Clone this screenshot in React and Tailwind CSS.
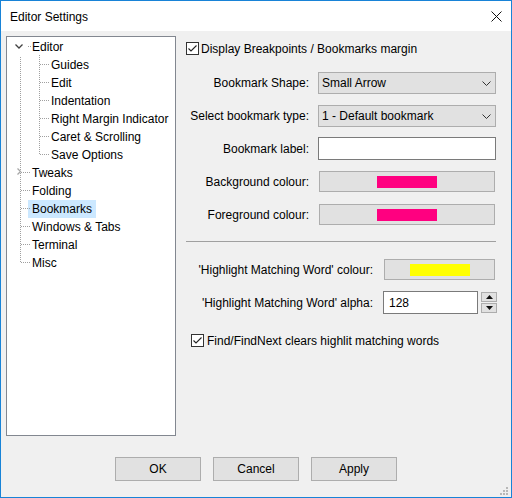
import React from 'react';

const tree = [
  { label: 'Editor', level: 0 },
  { label: 'Guides', level: 1 },
  { label: 'Edit', level: 1 },
  { label: 'Indentation', level: 1 },
  { label: 'Right Margin Indicator', level: 1 },
  { label: 'Caret & Scrolling', level: 1 },
  { label: 'Save Options', level: 1 },
  { label: 'Tweaks', level: 0 },
  { label: 'Folding', level: 0 },
  { label: 'Bookmarks', level: 0, selected: true },
  { label: 'Windows & Tabs', level: 0 },
  { label: 'Terminal', level: 0 },
  { label: 'Misc', level: 0 },
];

function Check() {
  return (
    <span className="w-[13px] h-[13px] border border-[#333333] bg-white flex items-center justify-center shrink-0">
      <svg width="11" height="11" viewBox="0 0 11 11">
        <path d="M1.5 5.5 L4 8 L9.5 2.5" stroke="#222" strokeWidth="1.1" fill="none" />
      </svg>
    </span>
  );
}

function Select({ value }) {
  return (
    <div className="ml-[9px] w-[178px] h-[22px] bg-[#e1e1e1] border border-[#adadad] flex items-center justify-between pl-[3px] pr-[4px]">
      <span>{value}</span>
      <svg width="9" height="5" viewBox="0 0 9 5">
        <path d="M0.5 0.5 L4.5 4.5 L8.5 0.5" stroke="#333" fill="none" />
      </svg>
    </div>
  );
}

function ColourButton({ colour, className }) {
  return (
    <div className={`h-[21px] bg-[#e1e1e1] border border-[#adadad] flex items-center justify-center ${className}`}>
      <div className={`w-[60px] h-[12px] ${colour}`} />
    </div>
  );
}

function TreeLines() {
  const childY = [0, 1, 2, 3, 4, 5].map(k => 27 + 18 * k + 0.5);
  const rootY = [0, 1, 2, 3, 4, 5].map(k => 135 + 18 * k + 0.5);
  return (
    <svg className="absolute inset-0 pointer-events-none" width="168" height="398">
      <g stroke="#a0a0a0" strokeDasharray="1 1" fill="none">
        <line x1="13.5" y1="20" x2="13.5" y2="226" />
        <line x1="32.5" y1="18" x2="32.5" y2="118" />
        <line x1="21" y1="9.5" x2="24" y2="9.5" />
        {childY.map(y => <line key={'c' + y} x1="33" y1={y} x2="43" y2={y} />)}
        {rootY.map(y => <line key={'r' + y} x1="14" y1={y} x2="24" y2={y} />)}
      </g>
      <path d="M8.5 7.5 L12 11 L15.5 7.5" stroke="#404040" strokeWidth="1.3" fill="none" />
      <path d="M10.5 131.5 L13.5 134.5 L10.5 137.5" stroke="#a6a6a6" strokeWidth="1.3" fill="none" />
    </svg>
  );
}

export default function App() {
  return (
    <div className="w-[512px] h-[498px] border border-[#1883d7] flex flex-col bg-[#f0f0f0] text-[12px] text-black font-['Liberation_Sans',Arial,sans-serif] overflow-hidden">
      {/* Title bar */}
      <div className="h-[30px] bg-white flex items-center justify-between pl-[9px] pr-[9px] shrink-0">
        <span className="text-[12px] mt-[1px]">Editor Settings</span>
        <svg width="11" height="11" viewBox="0 0 11 11" className="mt-[1px]">
          <path d="M0.5 0.5 L10.5 10.5 M10.5 0.5 L0.5 10.5" stroke="#111" strokeWidth="1" fill="none" />
        </svg>
      </div>

      {/* Body */}
      <div className="flex-1 flex flex-col relative">
        <div className="flex pt-[5px]">
          {/* Tree */}
          <div className="ml-[5px] w-[170px] h-[400px] bg-white border border-[#828790] relative shrink-0">
            <TreeLines />
            <div className="flex flex-col pt-[1px]">
              {tree.map(item => (
                <div key={item.label} className="h-[18px] flex items-center">
                  <span
                    className={`h-[18px] flex items-center px-[4px] whitespace-nowrap ${item.level === 0 ? 'ml-[21px]' : 'ml-[40px]'} ${item.selected ? 'bg-[#cce8ff]' : ''}`}
                  >
                    {item.label}
                  </span>
                </div>
              ))}
            </div>
          </div>

          {/* Settings */}
          <div className="flex-1 flex flex-col">
            <div className="mt-[6px] ml-[10px] h-[13px] flex items-center gap-[2px]">
              <Check />
              <span>Display Breakpoints / Bookmarks margin</span>
            </div>

            <div className="mt-[17px] flex items-center h-[22px]">
              <span className="w-[133px] text-right">Bookmark Shape:</span>
              <Select value="Small Arrow" />
            </div>

            <div className="mt-[11px] flex items-center h-[22px]">
              <span className="w-[133px] text-right">Select bookmark type:</span>
              <Select value="1 - Default bookmark" />
            </div>

            <div className="mt-[10px] flex items-center h-[23px]">
              <span className="w-[133px] text-right">Bookmark label:</span>
              <div className="ml-[9px] w-[178px] h-[23px] bg-white border border-[#7a7a7a]" />
            </div>

            <div className="mt-[11px] flex items-center h-[21px]">
              <span className="w-[133px] text-right">Background colour:</span>
              <ColourButton colour="bg-[#ff0080]" className="ml-[10px] w-[176px]" />
            </div>

            <div className="mt-[12px] flex items-center h-[21px]">
              <span className="w-[133px] text-right">Foreground colour:</span>
              <ColourButton colour="bg-[#ff0080]" className="ml-[10px] w-[176px]" />
            </div>

            <div className="mt-[16px] ml-[10px] w-[310px] h-px bg-[#a0a0a0]" />

            <div className="mt-[17px] flex items-center h-[21px]">
              <span className="w-[197px] text-right whitespace-nowrap">'Highlight Matching Word' colour:</span>
              <ColourButton colour="bg-[#ffff00]" className="ml-[11px] w-[111px]" />
            </div>

            <div className="mt-[11px] flex items-center h-[23px]">
              <span className="w-[197px] text-right whitespace-nowrap">'Highlight Matching Word' alpha:</span>
              <div className="ml-[10px] w-[95px] h-[23px] bg-white border border-[#7a7a7a] flex items-center pl-[5px]">128</div>
              <div className="ml-[3px] flex flex-col gap-[1px]">
                <div className="w-[16px] h-[10px] bg-[#e1e1e1] border border-[#adadad] flex items-center justify-center">
                  <svg width="7" height="4" viewBox="0 0 7 4"><path d="M0 4 L3.5 0 L7 4 Z" fill="#111" /></svg>
                </div>
                <div className="w-[16px] h-[10px] bg-[#e1e1e1] border border-[#adadad] flex items-center justify-center">
                  <svg width="7" height="4" viewBox="0 0 7 4"><path d="M0 0 L3.5 4 L7 0 Z" fill="#111" /></svg>
                </div>
              </div>
            </div>

            <div className="mt-[20px] ml-[15px] h-[13px] flex items-center gap-[3px]">
              <Check />
              <span>Find/FindNext clears highlit matching words</span>
            </div>
          </div>
        </div>

        {/* Buttons */}
        <div className="mt-[21px] ml-[114px] flex gap-[12px]">
          {['OK', 'Cancel', 'Apply'].map(b => (
            <div key={b} className="w-[86px] h-[24px] bg-[#e1e1e1] border border-[#adadad] flex items-center justify-center">
              {b}
            </div>
          ))}
        </div>

        {/* Resize grip */}
        <svg className="absolute right-[2px] bottom-[1px]" width="10" height="10" viewBox="0 0 10 10">
          <g fill="#b8b8b8">
            <rect x="7" y="1" width="2" height="2" />
            <rect x="4" y="4" width="2" height="2" />
            <rect x="7" y="4" width="2" height="2" />
            <rect x="1" y="7" width="2" height="2" />
            <rect x="4" y="7" width="2" height="2" />
            <rect x="7" y="7" width="2" height="2" />
          </g>
        </svg>
      </div>
    </div>
  );
}
